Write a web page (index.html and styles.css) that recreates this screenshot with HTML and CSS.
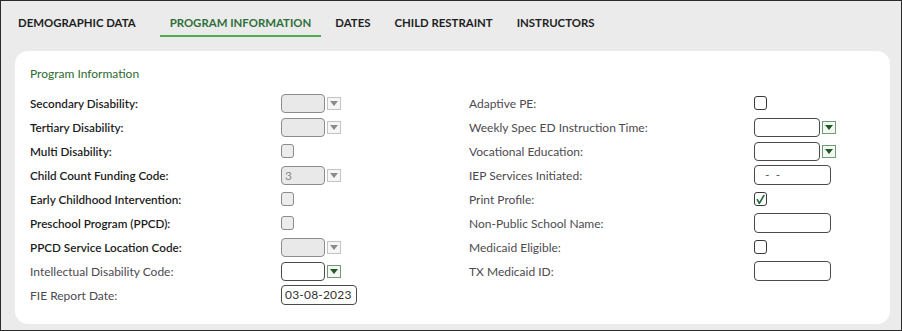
FILE: index.html
```html
<!DOCTYPE html>
<html lang="en">
<head>
    <meta charset="UTF-8">
    <meta name="viewport" content="width=device-width, initial-scale=1.0">
    <title>Special Ed - Program Information</title>
    <link rel="stylesheet" href="styles.css">
</head>
<body>
    <div class="frame">
        <div class="tabs">
            <a class="tab">DEMOGRAPHIC DATA</a>
            <a class="tab active">PROGRAM INFORMATION</a>
            <a class="tab">DATES</a>
            <a class="tab">CHILD RESTRAINT</a>
            <a class="tab">INSTRUCTORS</a>
        </div>

        <div class="card">
            <h2>Program Information</h2>

            <div class="form-grid">
                <!-- row 1 -->
                <label class="lbl strong">Secondary Disability:</label>
                <div class="ctl">
                    <span class="select disabled"></span><span class="arrow disabled"></span>
                </div>
                <label class="lbl">Adaptive PE:</label>
                <div class="ctl"><span class="check"></span></div>

                <!-- row 2 -->
                <label class="lbl strong">Tertiary Disability:</label>
                <div class="ctl">
                    <span class="select disabled"></span><span class="arrow disabled"></span>
                </div>
                <label class="lbl">Weekly Spec ED Instruction Time:</label>
                <div class="ctl">
                    <span class="select wide"></span><span class="arrow"></span>
                </div>

                <!-- row 3 -->
                <label class="lbl strong">Multi Disability:</label>
                <div class="ctl"><span class="check disabled"></span></div>
                <label class="lbl">Vocational Education:</label>
                <div class="ctl">
                    <span class="select wide"></span><span class="arrow"></span>
                </div>

                <!-- row 4 -->
                <label class="lbl strong">Child Count Funding Code:</label>
                <div class="ctl">
                    <span class="select disabled">3</span><span class="arrow disabled"></span>
                </div>
                <label class="lbl">IEP Services Initiated:</label>
                <div class="ctl"><span class="text-input">&nbsp;-&nbsp;&nbsp;-</span></div>

                <!-- row 5 -->
                <label class="lbl strong">Early Childhood Intervention:</label>
                <div class="ctl"><span class="check disabled"></span></div>
                <label class="lbl">Print Profile:</label>
                <div class="ctl">
                    <span class="check">
                        <svg width="11" height="11" viewBox="0 0 11 11"><path d="M2.3 5.6 L4.3 9.3 L8.9 1.5" fill="none" stroke="#1f6b3a" stroke-width="1.6" stroke-linecap="round" stroke-linejoin="round"/></svg>
                    </span>
                </div>

                <!-- row 6 -->
                <label class="lbl strong">Preschool Program (PPCD):</label>
                <div class="ctl"><span class="check disabled"></span></div>
                <label class="lbl">Non-Public School Name:</label>
                <div class="ctl"><span class="text-input"></span></div>

                <!-- row 7 -->
                <label class="lbl strong">PPCD Service Location Code:</label>
                <div class="ctl">
                    <span class="select disabled"></span><span class="arrow disabled"></span>
                </div>
                <label class="lbl">Medicaid Eligible:</label>
                <div class="ctl"><span class="check"></span></div>

                <!-- row 8 -->
                <label class="lbl">Intellectual Disability Code:</label>
                <div class="ctl">
                    <span class="select"></span><span class="arrow"></span>
                </div>
                <label class="lbl">TX Medicaid ID:</label>
                <div class="ctl"><span class="text-input"></span></div>

                <!-- row 9 -->
                <label class="lbl">FIE Report Date:</label>
                <div class="ctl"><span class="text-input date">03-08-2023</span></div>
                <span></span>
                <span></span>
            </div>
        </div>
    </div>
</body>
</html>
```

FILE: styles.css
```css
* {
    margin: 0;
    padding: 0;
    box-sizing: border-box;
    font-family: Lato, "Open Sans", sans-serif;
}

body {
    background-color: #ffffff;
}

.frame {
    width: 902px;
    height: 331px;
    border: 1px solid #2b2b2b;
    background-color: #ebebeb;
    overflow: hidden;
}

/* Tabs */

.tabs {
    display: flex;
    padding: 14px 0 0 5px;
}

.tab {
    display: block;
    padding: 0 12px 4px;
    font-size: 11.4px;
    line-height: 16px;
    font-weight: bold;
    color: #1e1e1e;
    border-bottom: 2px solid transparent;
    cursor: pointer;
}

.tab.active {
    padding: 0 10px 4px;
    margin: 0 2px 0 12px;
    color: #2f6f3a;
    border-bottom-color: #4cae4c;
}

/* Card */

.card {
    margin: 14px 11px 0 14px;
    height: 273px;
    padding: 15px 15px 0;
    background: white;
    border-radius: 13px;
}

.card h2 {
    font-size: 12px;
    line-height: 16px;
    font-weight: normal;
    color: #2c6a2f;
    margin-bottom: 9px;
}

.form-grid {
    display: grid;
    grid-template-columns: 251px 188px 285px auto;
    grid-auto-rows: 24px;
    align-items: center;
}

.lbl {
    font-size: 12px;
    color: #4d4a4f;
}

.lbl.strong {
    font-size: 11.7px;
    font-weight: 600;
    color: #1c1c1c;
}

.ctl {
    display: flex;
    align-items: center;
}

/* Controls */

.select {
    display: block;
    width: 44px;
    height: 19px;
    border: 1px solid #4a4a4a;
    border-radius: 4px;
    background: white;
    font-size: 12px;
    line-height: 17px;
    padding-left: 3px;
    color: #333;
}

.select.wide {
    width: 66px;
}

.select.disabled {
    background: #e9e9e9;
    border-color: #8c8c8c;
    color: #8a8a8a;
}

.arrow {
    display: block;
    position: relative;
    width: 14px;
    height: 13px;
    margin-left: 2px;
    border: 1px solid #6d9c72;
    background: #f6f6f6;
}

.arrow::after {
    content: "";
    position: absolute;
    left: 2px;
    top: 3px;
    border-left: 4px solid transparent;
    border-right: 4px solid transparent;
    border-top: 5px solid #1f5a24;
}

.arrow.disabled {
    border-color: #c4c4c4;
}

.arrow.disabled::after {
    border-top-color: #8d8d8d;
}

.check {
    display: flex;
    align-items: center;
    justify-content: center;
    width: 13px;
    height: 14px;
    border: 1px solid #3a3a3a;
    border-radius: 3px;
    background: white;
}

.check.disabled {
    background: #ececec;
    border-color: #8a8a8a;
}

.text-input {
    display: block;
    width: 77px;
    height: 20px;
    border: 1px solid #4a4a4a;
    border-radius: 4px;
    font-size: 12px;
    line-height: 18px;
    padding-left: 7px;
    color: #555;
}

.text-input.date {
    width: 76px;
    padding-left: 3px;
    color: #333;
    letter-spacing: 0.2px;
}
```
